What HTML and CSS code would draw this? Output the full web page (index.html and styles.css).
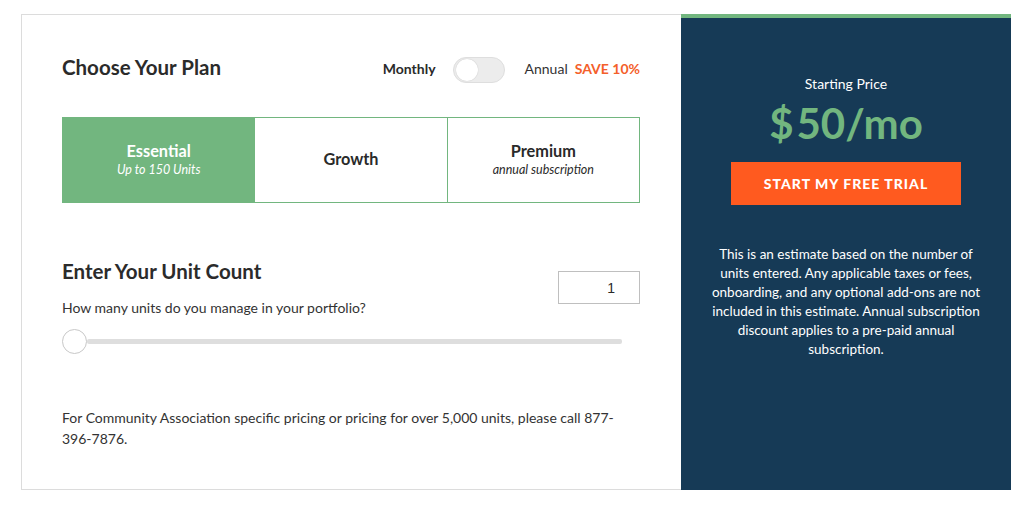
FILE: index.html
```html
<!DOCTYPE html>
<html>
<head>
<meta charset="utf-8">
<link rel="stylesheet" href="styles.css">
</head>
<body>
<div class="pricing">
  <section class="config">
    <div class="plan-head">
      <h2 class="title">Choose Your Plan</h2>
      <div class="billing">
        <span class="monthly">Monthly</span>
        <span class="toggle"><span class="knob"></span></span>
        <span class="annual">Annual</span>
        <span class="save">SAVE 10%</span>
      </div>
    </div>
    <div class="plans">
      <div class="plan active"><div class="plan-name">Essential</div><div class="plan-sub">Up to 150 Units</div></div>
      <div class="plan"><div class="plan-name">Growth</div></div>
      <div class="plan"><div class="plan-name">Premium</div><div class="plan-sub">annual subscription</div></div>
    </div>
    <div class="units">
      <div class="units-text">
        <h2 class="title">Enter Your Unit Count</h2>
        <p class="question">How many units do you manage in your portfolio?</p>
      </div>
      <div class="unit-input">1</div>
    </div>
    <div class="slider"><span class="thumb"></span><span class="track"></span></div>
    <p class="note">For Community Association specific pricing or pricing for over 5,000 units, please call 877-396-7876.</p>
  </section>
  <aside class="summary">
    <div class="starting">Starting Price</div>
    <div class="price">$<span class="amt">50</span>/mo</div>
    <div class="cta">START MY FREE TRIAL</div>
    <p class="disclaimer">This is an estimate based on the number of units entered. Any applicable taxes or fees, onboarding, and any optional add-ons are not included in this estimate. Annual subscription discount applies to a pre-paid annual subscription.</p>
  </aside>
</div>
</body>
</html>
```
FILE: styles.css
```css
* { box-sizing: border-box; }
body {
  margin: 0;
  background: #fff;
  font-family: "Lato", "Liberation Sans", sans-serif;
  color: #2a2a2a;
}
.pricing {
  display: flex;
  margin: 14px 0 0 21px;
  width: 990px;
  height: 476px;
}
.config {
  width: 660px;
  border: 1px solid #dcdcdc;
  border-right: none;
  padding: 40px 41px 0 40px;
}
.plan-head {
  display: flex;
  align-items: center;
  justify-content: space-between;
  height: 30px;
}
.plan-head .title { padding-bottom: 7px; }
.title {
  margin: 0;
  font-size: 20.5px;
  font-weight: 700;
  color: #2b2b2b;
}
.billing {
  display: flex;
  align-items: center;
  font-size: 14px;
  padding-bottom: 3px;
}
.monthly { font-weight: 700; }
.toggle {
  width: 52px;
  height: 26px;
  border-radius: 13px;
  background: #ececec;
  border: 1px solid #dedede;
  margin: 2px 20px 0 17px;
  position: relative;
}
.knob {
  position: absolute;
  left: 2px;
  top: 1px;
  width: 22px;
  height: 22px;
  border-radius: 50%;
  background: #fff;
  box-shadow: 0 0 1px rgba(0,0,0,.25);
}
.annual { color: #333; }
.save {
  color: #f4602a;
  font-weight: 700;
  margin-left: 7px;
}
.plans {
  display: flex;
  margin-top: 32px;
  height: 86px;
  border: 1px solid #72b67f;
}
.plan {
  flex: 1;
  display: flex;
  flex-direction: column;
  align-items: center;
  justify-content: center;
  border-left: 1px solid #72b67f;
  padding-bottom: 2px;
}
.plan:first-child { border-left: none; }
.plan.active { background: #72b67f; color: #fff; }
.plan-name { font-size: 16.3px; font-weight: 700; line-height: 20px; }
.plan-sub { font-size: 12.5px; font-style: italic; line-height: 16px; margin-top: 1px; }
.units {
  display: flex;
  justify-content: space-between;
  margin-top: 56px;
}
.question {
  margin: 16px 0 0 0;
  font-size: 14px;
  color: #333;
}
.unit-input {
  width: 82px;
  height: 33px;
  border: 1px solid #bfbfbf;
  margin-top: 12px;
  font-family: "Liberation Sans", sans-serif;
  font-size: 14px;
  text-align: right;
  padding: 8px 24px 0 0;
}
.slider {
  display: flex;
  align-items: center;
  margin-top: 13px;
  width: 560px;
}
.thumb {
  width: 25px;
  height: 25px;
  border-radius: 50%;
  border: 1px solid #c8c8c8;
  background: #fff;
  flex-shrink: 0;
}
.track {
  flex: 1;
  height: 5px;
  background: #dedede;
  border-radius: 2px;
}
.note {
  margin: 53px 0 0 0;
  font-size: 14px;
  line-height: 21px;
  color: #333;
}
.summary {
  width: 330px;
  background: #163a56;
  border-top: 4px solid #72b67f;
  color: #fff;
  text-align: center;
  padding: 57px 0 0;
  display: flex;
  flex-direction: column;
  align-items: center;
}
.starting { font-size: 14px; }
.price {
  color: #72b67f;
  font-size: 42px;
  font-weight: 700;
  margin-top: 8px;
  line-height: 46px;
}
.amt { margin-left: 3px; }
.cta {
  margin-top: 16px;
  width: 230px;
  height: 43px;
  background: #ff5a1f;
  color: #fff;
  font-weight: 900;
  font-size: 14px;
  letter-spacing: 1px;
  display: flex;
  align-items: center;
  justify-content: center;
}
.disclaimer {
  margin: 40px 0 0 0;
  width: 272px;
  font-size: 13.5px;
  line-height: 19px;
}
```
